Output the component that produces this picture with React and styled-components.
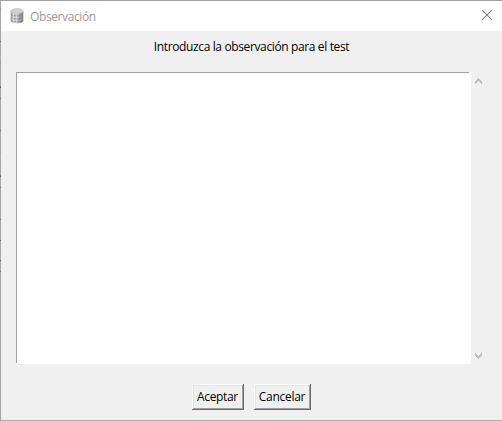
import React from "react";
import styled, { createGlobalStyle } from "styled-components";

const GlobalStyle = createGlobalStyle`
  * { box-sizing: border-box; }
  body { margin: 0; background: #f0f0f0; overflow: hidden; }
`;

const mark = (y, color) =>
  `linear-gradient(${color}, ${color}) 0 ${y}px / 1px 1px no-repeat`;

const edge = [
  mark(9, "#777"), mark(41, "#666"), mark(62, "#8c8c8c"), mark(86, "#777"),
  mark(87, "#555"), mark(98, "#777"), mark(130, "#707070"), mark(152, "#999"),
  mark(175, "#777"), mark(176, "#555"), mark(187, "#707070"), mark(219, "#777"),
  mark(240, "#606060"), mark(260, "#555"), mark(271, "#777"),
].join(",");

const Dialog = styled.div`
  width: 502px;
  height: 421px;
  display: flex;
  flex-direction: column;
  border-top: 1px solid #9f9f9f;
  border-bottom: 1px solid #aaa;
  font-family: "Open Sans", "Noto Sans", sans-serif;
  font-size: 12px;
  color: #000;
  background: ${edge}, linear-gradient(90deg, #a6a6a6 1px, #f0f0f0 1px);
  background-origin: border-box;
`;

const TitleBar = styled.header`
  height: 30px;
  margin-left: 1px;
  padding: 0 10px 0 9px;
  display: flex;
  align-items: center;
  background: #fff;
  color: #999;
`;

const Title = styled.span`
  margin-left: 6px;
  padding-top: 1px;
  flex: 1;
  line-height: 16px;
  font-size: 12px;
  letter-spacing: -0.4px;
`;

const CloseButton = styled.button`
  width: 10px;
  height: 10px;
  padding: 0;
  border: 0;
  margin-top: -2px;
  background: none;
  display: flex;
`;

const Prompt = styled.p`
  margin: 7px 0 16px 1px;
  height: 18px;
  line-height: 18px;
  text-align: center;
  letter-spacing: -0.37px;
  white-space: nowrap;
`;

const Editor = styled.div`
  height: 292px;
  margin: 0 16px;
  display: flex;
`;

const TextArea = styled.textarea`
  width: 455px;
  height: 292px;
  padding: 4px;
  resize: none;
  outline: 0;
  border: 0;
  background:
    linear-gradient(#a0a0a0, #a0a0a0) 0 0 / 453px 1px no-repeat,
    linear-gradient(#a0a0a0, #a0a0a0) 0 0 / 1px 291px no-repeat,
    #fff;
`;

const Scrollbar = styled.div`
  width: 15px;
  padding: 6px 0 5px 4px;
  display: flex;
  flex-direction: column;
  justify-content: space-between;
`;

const Actions = styled.footer`
  display: flex;
  gap: 10px;
  margin: 20px 0 0 192px;
`;

const Button = styled.button`
  width: ${({ $width }) => $width}px;
  height: 26px;
  padding: 0 1px 0 0;
  font: inherit;
  color: #000;
  line-height: 18px;
  letter-spacing: ${({ $spacing }) => $spacing}px;
  white-space: nowrap;
  border: 0;
  background: #f0f0f0;
  box-shadow:
    inset -1px -1px #696969,
    inset 1px 1px #fff,
    inset -2px -2px #a0a0a0,
    inset 2px 2px #e3e3e3;
`;

const DatabaseIcon = () => (
  <svg width="14" height="16" viewBox="0 0 14 16">
    <defs>
      <linearGradient id="metal">
        <stop offset="0" stopColor="#a0a0a0" />
        <stop offset=".32" stopColor="#f4f4f4" />
        <stop offset=".6" stopColor="#c0c0c0" />
        <stop offset="1" stopColor="#808080" />
      </linearGradient>
    </defs>
    <path d="M.7 3V13C.7 16.2 13.3 16.2 13.3 13V3Z" fill="url(#metal)" />
    <ellipse cx="7" cy="3" rx="6.2" ry="2.5" fill="#d0d0d0" stroke="#bababa" strokeWidth=".5" />
    <path d="M1 6.5Q7 9.5 13 6.5M1 9.5Q7 12.5 13 9.5M1 12.5Q7 15.5 13 12.5" fill="none" stroke="#707070" strokeWidth=".8" strokeDasharray="2 1" />
    <path d="M5 5.5V15M9.5 5.5V15" stroke="#8c8c8c" strokeWidth=".6" />
  </svg>
);

const Chevron = ({ down }) => (
  <svg width="7" height="6" viewBox="0 0 7 6" shapeRendering="crispEdges">
    <path
      d={down
        ? "M0 0H1V1H2V2H3V3H4V2H5V1H6V0H7V3H6V4H5V5H4V6H3V5H2V4H1V3H0Z"
        : "M3 0H4V1H5V2H6V3H7V6H6V5H5V4H4V3H3V4H2V5H1V6H0V3H1V2H2V1H3Z"}
      fill="#bfbfbf"
    />
  </svg>
);

export default function App() {
  return (
    <>
      <GlobalStyle />
      <Dialog role="dialog" aria-label="Observación">
        <TitleBar>
          <DatabaseIcon />
          <Title>Observación</Title>
          <CloseButton aria-label="Cerrar">
            <svg width="10" height="10" viewBox="0 0 10 10">
              <path d="M0 0L10 10M10 0L0 10" stroke="#808080" strokeWidth="1.1" />
            </svg>
          </CloseButton>
        </TitleBar>
        <Prompt>Introduzca la observación para el test</Prompt>
        <Editor>
          <TextArea aria-label="Observación" />
          <Scrollbar>
            <Chevron />
            <Chevron down />
          </Scrollbar>
        </Editor>
        <Actions>
          <Button $width={52} $spacing={-0.35}>Aceptar</Button>
          <Button $width={57} $spacing={-0.27}>Cancelar</Button>
        </Actions>
      </Dialog>
    </>
  );
}
